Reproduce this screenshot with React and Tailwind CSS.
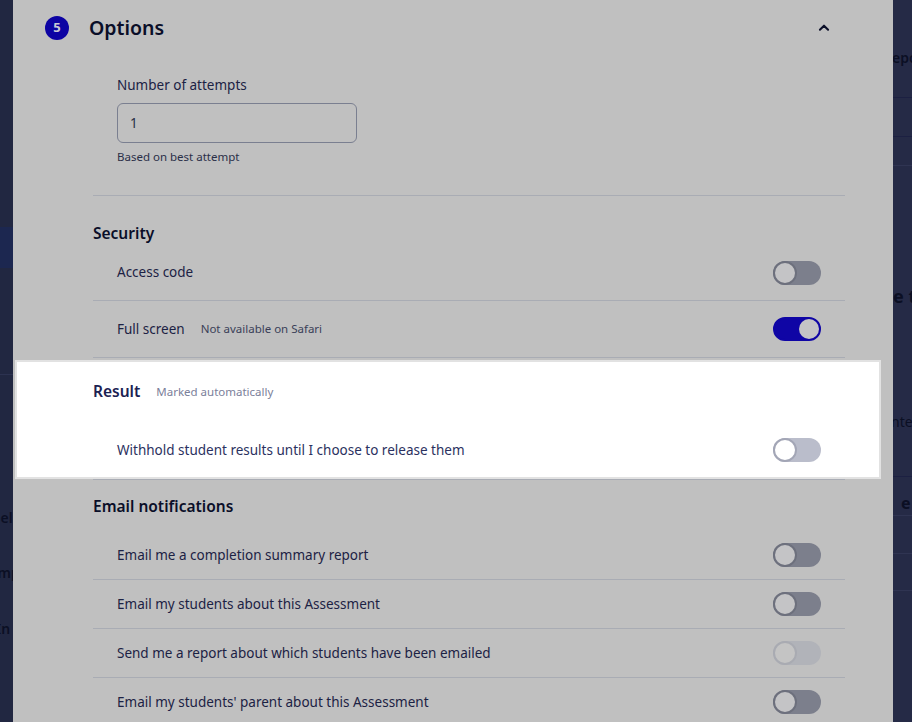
import React from 'react';

const Toggle = ({ on = false, variant = 'dim' }) => {
  if (on) {
    return (
      <div className="w-[48px] h-[24px] rounded-full bg-[#0f05a5] border-2 border-[#0f05a5] flex items-center justify-end">
        <div className="w-[20px] h-[20px] rounded-full bg-[#c4c4c6]" />
      </div>
    );
  }
  if (variant === 'bright') {
    return (
      <div className="w-[48px] h-[24px] rounded-full bg-[#babdcb] flex items-center">
        <div className="w-[24px] h-[24px] rounded-full bg-white border-2 border-[#a3a6b6]" />
      </div>
    );
  }
  if (variant === 'disabled') {
    return (
      <div className="w-[48px] h-[24px] rounded-full bg-[#b1b3b9] flex items-center">
        <div className="w-[24px] h-[24px] rounded-full bg-[#c4c4c4] border-2 border-[#a9abb2]" />
      </div>
    );
  }
  return (
    <div className="w-[48px] h-[24px] rounded-full bg-[#7c7f8c] flex items-center">
      <div className="w-[24px] h-[24px] rounded-full bg-[#c4c4c6] border-2 border-[#6d707d]" />
    </div>
  );
};

const Row = ({ label, note, toggle, height = 'h-[49px]' }) => (
  <div className={`${height} border-b border-[#a9acb4] px-6 flex items-center justify-between`}>
    <div className="flex items-center gap-4">
      <span className="text-[13.5px] text-[#1c2244]">{label}</span>
      {note && <span className="text-[11.5px] text-[#3a3f58]">{note}</span>}
    </div>
    {toggle}
  </div>
);

const LeftStrip = () => (
  <div className="w-[13px] shrink-0 bg-[#212741] overflow-hidden flex flex-col text-[14px] font-semibold text-[#0b0f24]">
    <div className="h-[227px] shrink-0" />
    <div className="h-[41px] shrink-0 bg-[#1c2750]" />
    <div className="h-[107px] shrink-0 border-b border-[#2c3250]" />
    <div className="h-[132px] shrink-0" />
    <div className="h-[20px] shrink-0 -ml-[16px] whitespace-nowrap">Spelling</div>
    <div className="h-[35px] shrink-0" />
    <div className="h-[20px] shrink-0 -ml-[20px] whitespace-nowrap">Compare</div>
    <div className="h-[36px] shrink-0" />
    <div className="h-[20px] shrink-0 -ml-[4px] whitespace-nowrap">In</div>
  </div>
);

const RightStrip = () => (
  <div className="flex-1 bg-[#252a46] overflow-hidden flex flex-col text-[14px] text-[#0b0f24]">
    <div className="h-[47px] shrink-0" />
    <div className="h-[20px] shrink-0 font-semibold whitespace-nowrap -ml-[1px]">eport</div>
    <div className="h-[31px] shrink-0 border-b border-[#1c2042]" />
    <div className="h-[39px] shrink-0 border-b border-[#1c2042]" />
    <div className="h-[29px] shrink-0 border-b border-[#2f3452]" />
    <div className="h-[118px] shrink-0" />
    <div className="h-[24px] shrink-0 font-bold text-[18px] whitespace-nowrap leading-[24px]">e te</div>
    <div className="h-[103px] shrink-0" />
    <div className="h-[20px] shrink-0 whitespace-nowrap -ml-[2px]">nter</div>
    <div className="h-[46px] shrink-0 border-b border-[#1c2042]" />
    <div className="h-[38px] shrink-0 pt-[16px] pl-[8px] text-[16px] font-bold leading-[20px]">e</div>
    <div className="h-[38px] shrink-0 border-t border-[#2f3452]" />
    <div className="h-[37px] shrink-0 border-t border-[#2f3452]" />
    <div className="h-[37px] shrink-0 border-t border-[#2f3452]" />
  </div>
);

export default function App() {
  return (
    <div className="w-[912px] h-[722px] overflow-hidden flex bg-[#222843]" style={{ fontFamily: '"Noto Sans", "Open Sans", sans-serif' }}>
      <LeftStrip />
      <div className="w-[880px] shrink-0 bg-[#c0c0c0] flex flex-col">
        {/* header */}
        <div className="h-[56px] shrink-0 flex items-center pl-[32px] pr-[62px]">
          <div className="w-[24px] h-[24px] rounded-full bg-[#0d03a3] flex items-center justify-center text-[13px] font-bold text-[#c8c8d4]">5</div>
          <h2 className="ml-[20px] text-[19.5px] font-semibold text-[#0a0e28]">Options</h2>
          <svg className="ml-auto" width="14" height="14" viewBox="0 0 24 24" fill="none" stroke="#0a0e28" strokeWidth="3.5" strokeLinecap="round" strokeLinejoin="round">
            <path d="M5 15l7-7 7 7" />
          </svg>
        </div>

        <div className="pl-[80px] w-[832px] flex flex-col">
          {/* attempts */}
          <div className="pl-6 pt-[19px] pb-[30px] border-b border-[#a9acb4]">
            <label className="block h-[20px] leading-[20px] text-[13.5px] text-[#1c2244]">Number of attempts</label>
            <div className="mt-[8px] w-[240px] h-[40px] rounded-[6px] border border-[#7a7f90] flex items-center px-[12px] text-[13.5px] text-[#2a2f48]">1</div>
            <p className="mt-[6px] h-[16px] leading-[16px] text-[11.5px] text-[#2a2f48]">Based on best attempt</p>
          </div>

          {/* security */}
          <h3 className="mt-[25px] h-[24px] leading-[24px] text-[15.5px] font-semibold text-[#0a0e28]">Security</h3>
          <Row label="Access code" height="h-[56px]" toggle={<Toggle />} />
          <Row label="Full screen" note="Not available on Safari" height="h-[57px]" toggle={<Toggle on />} />
        </div>

        {/* highlighted result section */}
        <div className="mt-[2px] ml-[2px] w-[866px] bg-white border-2 border-[#e2e2e2] pl-[76px] pr-[34px] pt-[18px] pb-[3px]">
          <div className="h-[24px] flex items-center gap-4">
            <h3 className="text-[15.5px] font-semibold text-[#1b2152]">Result</h3>
            <span className="text-[11.5px] text-[#7b809a]">Marked automatically</span>
          </div>
          <div className="mt-[22px] h-[48px] px-6 flex items-center justify-between">
            <span className="text-[13.5px] text-[#2b3160]">Withhold student results until I choose to release them</span>
            <Toggle variant="bright" />
          </div>
        </div>

        <div className="pl-[80px] w-[832px] flex flex-col">
          <div className="border-t border-[#a9acb4]" />
          <h3 className="mt-[14px] h-[24px] leading-[24px] text-[15.5px] font-semibold text-[#0a0e28]">Email notifications</h3>
          <div className="mt-[13px]">
            <Row label="Email me a completion summary report" toggle={<Toggle />} />
            <Row label="Email my students about this Assessment" toggle={<Toggle />} />
            <Row label="Send me a report about which students have been emailed" toggle={<Toggle variant="disabled" />} />
            <Row label="Email my students' parent about this Assessment" toggle={<Toggle />} />
          </div>
        </div>
      </div>
      <RightStrip />
    </div>
  );
}
